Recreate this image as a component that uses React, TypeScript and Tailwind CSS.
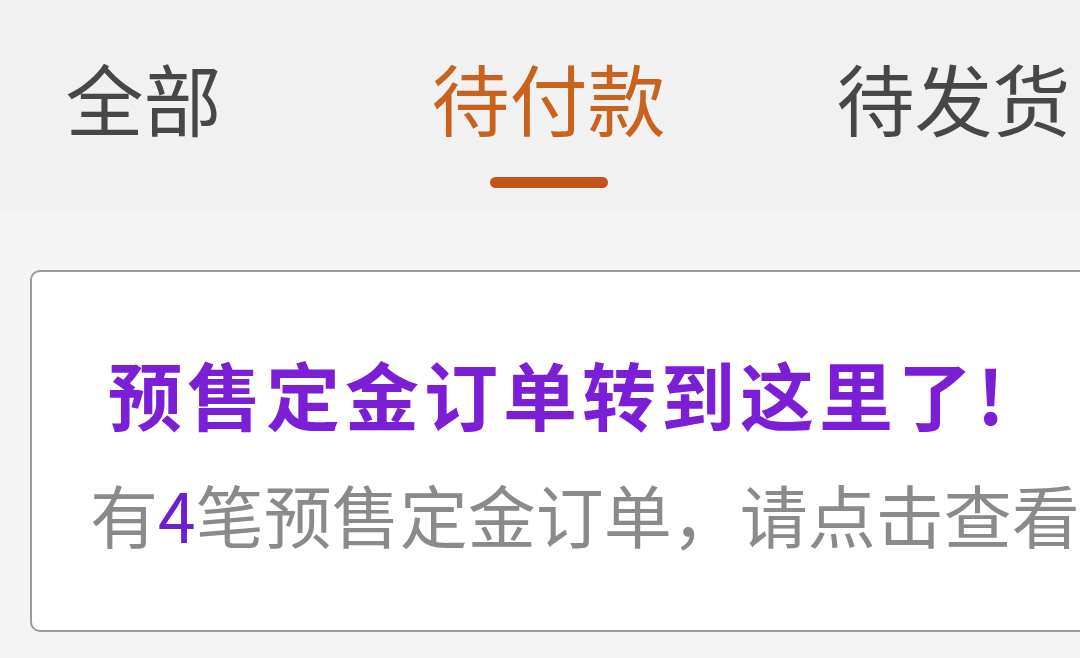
import React from "react";

const TABS = ["全部", "待付款", "待发货"];
const ACTIVE = 1;

const FONT = { fontFamily: '"Noto Sans CJK SC", "Noto Sans", sans-serif' };

export default function App() {
  return (
    <div
      className="w-[1080px] h-[658px] overflow-hidden bg-[#f4f4f4]"
      style={FONT}
    >
      {/* Tab bar */}
      <div className="h-[210px] bg-[#f1f1f1] overflow-hidden">
        <div className="flex ml-[-59px] pt-[43px]">
          {TABS.map((t, i) => (
            <div
              key={t}
              className="w-[405px] shrink-0 flex flex-col items-center"
            >
              <span
                className={`text-[78px] leading-[108px] whitespace-nowrap ${
                  i === ACTIVE ? "text-[#c8621f]" : "text-[#474747]"
                }`}
              >
                {t}
              </span>
              {i === ACTIVE && (
                <div className="mt-[26px] w-[118px] h-[11px] rounded-full bg-[#c4521b]" />
              )}
            </div>
          ))}
        </div>
      </div>

      {/* Presale notice card */}
      <div className="pt-[60px] pl-[30px]">
        <div className="w-[1100px] h-[362px] bg-white border-2 border-[#9b9b9b] rounded-[10px] overflow-hidden">
          <div className="pl-[76px] pt-[71px] text-[74px] leading-[100px] font-bold tracking-[5px] text-[#7a1fd6] whitespace-nowrap">
            预售定金订单转到这里了!
          </div>
          <div className="pl-[58px] mt-[26px] text-[68px] leading-[90px] text-[#8a8a8a] whitespace-nowrap">
            有<span className="text-[#6c1fcc]">4</span>笔预售定金订单，请点击查看
          </div>
        </div>
      </div>
    </div>
  );
}
